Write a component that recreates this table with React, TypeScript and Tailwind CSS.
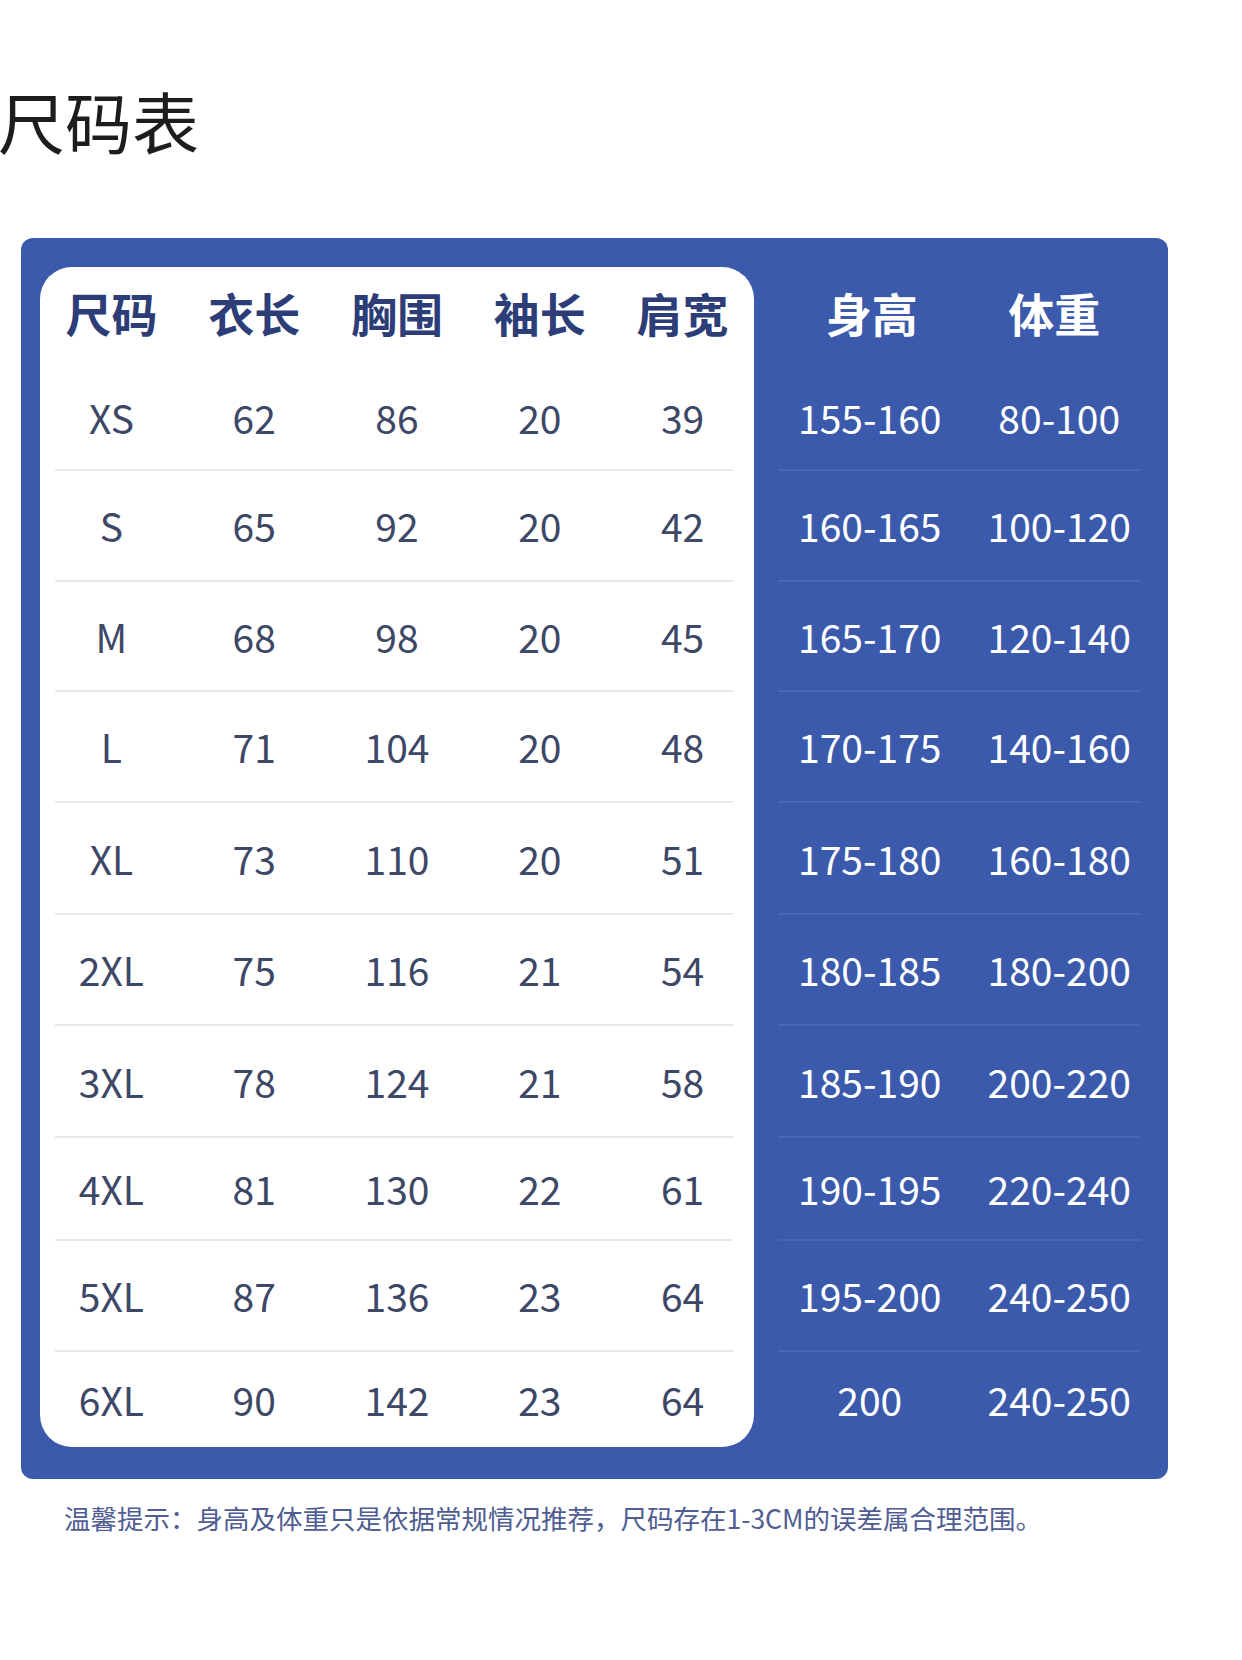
const rows = [
  { h: "h-[104px]", v: ["XS", "62", "86", "20", "39"], r: ["155-160", "80-100"], first: true },
  { h: "h-[111px]", v: ["S", "65", "92", "20", "42"], r: ["160-165", "100-120"] },
  { h: "h-[110px]", v: ["M", "68", "98", "20", "45"], r: ["165-170", "120-140"] },
  { h: "h-[111px]", v: ["L", "71", "104", "20", "48"], r: ["170-175", "140-160"] },
  { h: "h-[112px]", v: ["XL", "73", "110", "20", "51"], r: ["175-180", "160-180"] },
  { h: "h-[111px]", v: ["2XL", "75", "116", "21", "54"], r: ["180-185", "180-200"] },
  { h: "h-[112px]", v: ["3XL", "78", "124", "21", "58"], r: ["185-190", "200-220"] },
  { h: "h-[103px]", v: ["4XL", "81", "130", "22", "61"], r: ["190-195", "220-240"] },
  { h: "h-[111px]", v: ["5XL", "87", "136", "23", "64"], r: ["195-200", "240-250"] },
  { h: "h-[97px]", v: ["6XL", "90", "142", "23", "64"], r: ["200", "240-250"] },
];

const leftHead = ["尺码", "衣长", "胸围", "袖长", "肩宽"];

export default function App() {
  return (
    <div className="min-h-[1660px] bg-white font-['Noto_Sans_CJK_SC','Noto_Sans',sans-serif]">
      <h1 className="pt-[86px] -ml-[2px] text-[67px] leading-none font-normal text-[#1d1d1f]">尺码表</h1>

      {/* blue panel */}
      <div className="mt-[85px] ml-[21px] w-[1147px] flex rounded-[12px] bg-[#3b5aab] pl-[19px] pt-[29px] pb-[32px]">
        {/* white card */}
        <div className="w-[714px] rounded-[32px] bg-white">
          <div className="grid grid-cols-5 h-[98px] pb-[8px] items-center text-center text-[46px] font-bold leading-none text-[#2c3d78]">
            {leftHead.map((t) => (
              <span key={t}>{t}</span>
            ))}
          </div>
          {rows.map((row) => (
            <div key={row.v[0]} className={`${row.h} flex flex-col`}>
              {!row.first && <div className="ml-[15px] mr-[21px] h-[2px] bg-[#e8e9ee]" />}
              <div className="grid grid-cols-5 flex-1 items-center text-center text-[39px] leading-none text-[#3d4766]">
                {row.v.map((c, i) => (
                  <span key={i}>{c}</span>
                ))}
              </div>
            </div>
          ))}
        </div>

        {/* right columns */}
        <div className="flex-1 pl-[21px] pr-[14px]">
          <div className="grid grid-cols-2 h-[98px] pb-[8px] items-center text-center text-[46px] font-bold leading-none text-white">
            <span className="pl-[4px]">身高</span>
            <span className="pr-[10px]">体重</span>
          </div>
          {rows.map((row) => (
            <div key={row.v[0]} className={`${row.h} flex flex-col`}>
              {!row.first && <div className="ml-[3px] mr-[13px] h-[2px] bg-[#4767b9]" />}
              <div className="grid grid-cols-2 flex-1 items-center text-center text-[39px] leading-none text-white">
                {row.r.map((c, i) => (
                  <span key={i}>{c}</span>
                ))}
              </div>
            </div>
          ))}
        </div>
      </div>

      <p className="mt-[26px] pl-[64px] text-[26.5px] leading-none text-[#4f5d92]">
        温馨提示：身高及体重只是依据常规情况推荐，尺码存在1-3CM的误差属合理范围。
      </p>
    </div>
  );
}
